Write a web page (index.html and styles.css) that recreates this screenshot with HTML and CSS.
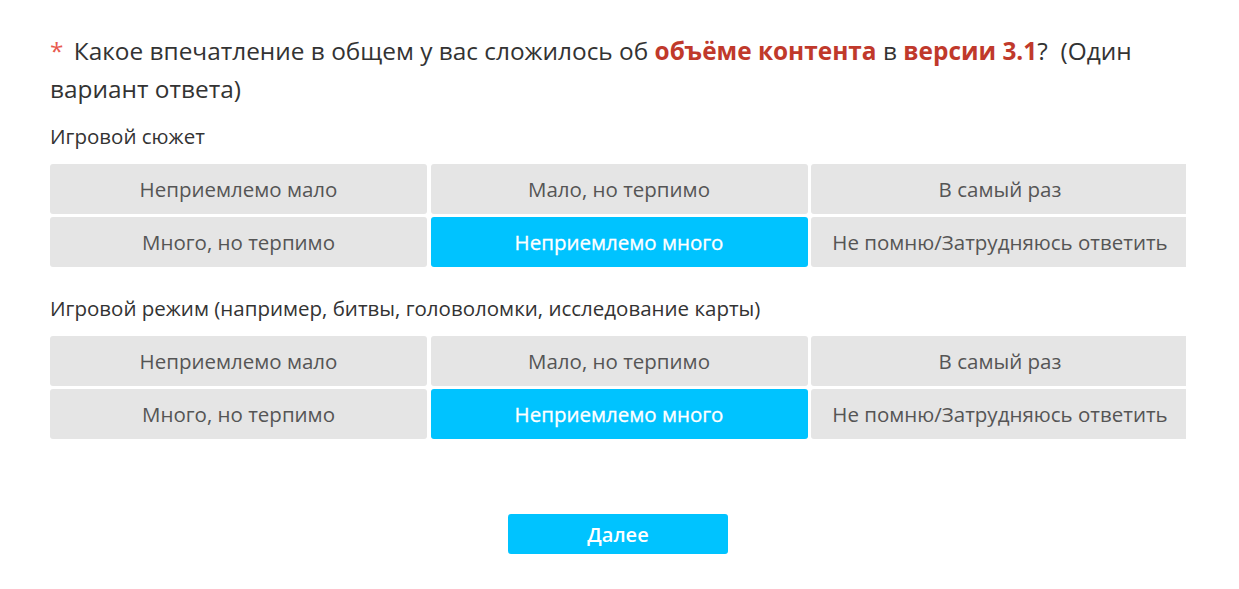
FILE: index.html
```html
<!DOCTYPE html>
<html lang="ru">
<head>
    <meta charset="UTF-8">
    <meta name="viewport" content="width=device-width, initial-scale=1.0">
    <title>Опрос</title>
    <link rel="stylesheet" href="styles.css">
</head>
<body>
    <div class="container">
        <div class="question">
            <span class="req">*</span> Какое впечатление в общем у вас сложилось об <b>объёме контента</b> в <b>версии 3.1</b>?&nbsp; (Один вариант ответа)
        </div>

        <div class="group">
            <div class="label">Игровой сюжет</div>
            <div class="options">
                <div class="opt">Неприемлемо мало</div>
                <div class="opt">Мало, но терпимо</div>
                <div class="opt">В самый раз</div>
                <div class="opt">Много, но терпимо</div>
                <div class="opt active">Неприемлемо много</div>
                <div class="opt">Не помню/Затрудняюсь ответить</div>
            </div>
        </div>

        <div class="group">
            <div class="label">Игровой режим (например, битвы, головоломки, исследование карты)</div>
            <div class="options">
                <div class="opt">Неприемлемо мало</div>
                <div class="opt">Мало, но терпимо</div>
                <div class="opt">В самый раз</div>
                <div class="opt">Много, но терпимо</div>
                <div class="opt active">Неприемлемо много</div>
                <div class="opt">Не помню/Затрудняюсь ответить</div>
            </div>
        </div>

        <div class="footer">
            <button class="next">Далее</button>
        </div>
    </div>
</body>
</html>
```

FILE: styles.css
```css
body {
    margin: 0;
    background: #ffffff;
    color: #333333;
    font-family: "Open Sans", "Noto Sans", sans-serif;
}
.container {
    width: 1136px;
    margin-left: 50px;
    padding-top: 32px;
}
.question {
    font-size: 24.4px;
    line-height: 38px;
    color: #333333;
}
.question b {
    color: #c0392b;
    font-weight: 700;
}
.req {
    color: #e85a4f;
    margin-right: 4px;
}
.group {
    margin-top: 14px;
}
.group + .group {
    margin-top: 27px;
}
.label {
    font-size: 20.5px;
    line-height: 28px;
    margin-bottom: 14px;
}
.options {
    display: grid;
    grid-template-columns: 377px 377px 378px;
    gap: 3px 3.5px;
    overflow: hidden;
}
.opt {
    height: 50px;
    display: flex;
    align-items: center;
    justify-content: center;
    background: #e5e5e5;
    border-radius: 3px;
    color: #555555;
    font-size: 20.5px;
}
.opt.active {
    background: #00c3ff;
    color: #ffffff;
    -webkit-text-stroke: 0.3px #ffffff;
}
.footer {
    display: flex;
    justify-content: center;
    margin-top: 75px;
}
.next {
    width: 220px;
    height: 40px;
    border: none;
    border-radius: 3px;
    background: #00c3ff;
    color: #ffffff;
    font-family: inherit;
    font-size: 20px;
    font-weight: 600;
}
```
